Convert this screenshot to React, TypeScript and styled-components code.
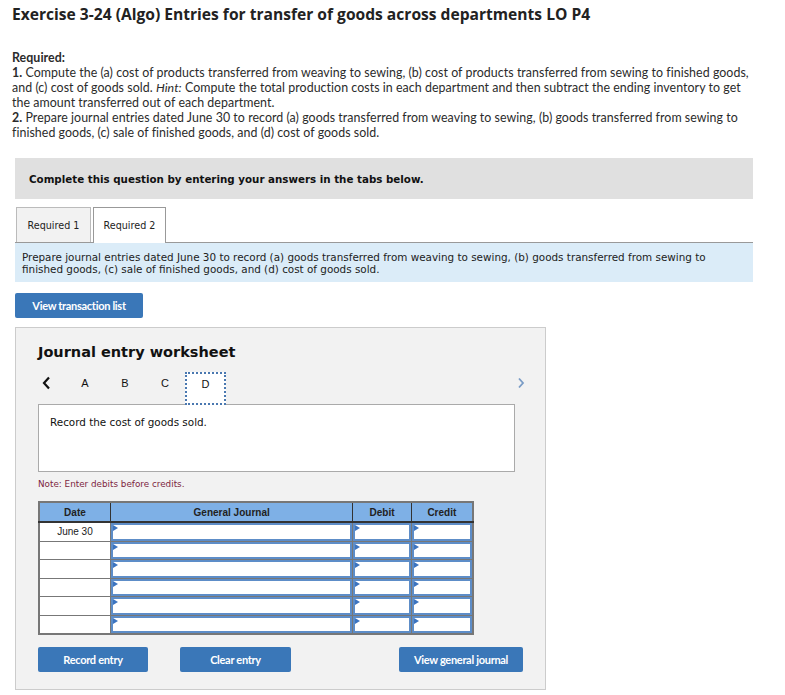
import React from 'react'
import styled, { createGlobalStyle } from 'styled-components'

const GlobalStyle = createGlobalStyle`
  body {
    margin: 0;
    background: #fff;
    font-family: Lato, "Open Sans", sans-serif;
    color: #222;
  }
`

const Page = styled.div`
  width: 738px;
  padding: 4px 0 0 15px;
`

const Title = styled.h1`
  margin: 0 0 0 -3px;
  font-family: "Open Sans", Lato, sans-serif;
  font-size: 15.6px;
  font-weight: 700;
  line-height: 20px;
  color: #222;
`

const Required = styled.div`
  margin: 26px 0 0 -3px;
  font-size: 12.4px;
  line-height: 15px;
  color: #2b2b2b;
  letter-spacing: 0.05px;
  b, i {
    display: inline-block;
    line-height: 15px;
    height: 15px;
    vertical-align: top;
  }
  b { font-weight: 700; }
`

const Banner = styled.div`
  margin-top: 18px;
  height: 41px;
  background: #e0e0e0;
  display: flex;
  align-items: center;
  padding-left: 14px;
  font-family: "DejaVu Sans", Verdana, sans-serif;
  font-size: 10.3px;
  font-weight: 700;
  color: #111;
`

const TabBar = styled.div`
  margin-top: 8px;
  display: flex;
  gap: 2px;
  border-bottom: 1px solid #999;
  padding-left: 1px;
`

const Tab = styled.div<{ $active?: boolean; $w: number }>`
  width: ${p => p.$w}px;
  box-sizing: border-box;
  display: flex;
  align-items: center;
  justify-content: center;
  font-family: "DejaVu Sans", Verdana, sans-serif;
  font-size: 9.6px;
  color: #222;
  background: ${p => (p.$active ? '#fff' : '#f2f2f2')};
  border: 1px solid ${p => (p.$active ? '#999' : '#bbb')};
  border-bottom: none;
  margin-bottom: ${p => (p.$active ? '-1px' : '0')};
  height: ${p => (p.$active ? '36px' : '35px')};
`

const Info = styled.div`
  background: #dbecf8;
  padding: 8px 7px 7px;
  font-family: "DejaVu Sans", Verdana, sans-serif;
  font-size: 10.4px;
  line-height: 12px;
  color: #222;
`

const Button = styled.button<{ $width: number }>`
  width: ${p => p.$width}px;
  height: 25px;
  background: #3a77b8;
  border: none;
  border-radius: 2px;
  color: #fff;
  font-family: Lato, sans-serif;
  font-weight: 700;
  font-size: 11px;
  letter-spacing: -0.3px;
  padding: 0;
  cursor: pointer;
`

const TopButton = styled(Button)`
  margin-top: 11px;
`

const Panel = styled.div`
  margin-top: 9px;
  width: 531px;
  height: 363px;
  background: #f2f2f2;
  border: 1px solid #ccc;
  padding: 14px 23px 0 22px;
  box-sizing: border-box;
`

const PanelTitle = styled.div`
  font-family: "DejaVu Sans", Verdana, sans-serif;
  font-weight: 700;
  font-size: 14.5px;
  color: #111;
  line-height: 20px;
`

const Nav = styled.div`
  margin-top: 10px;
  display: flex;
  align-items: flex-start;
  height: 32px;
  position: relative;
  z-index: 1;
`

const Arrow = styled.div<{ $right?: boolean }>`
  width: 14px;
  height: 22px;
  display: flex;
  align-items: center;
  justify-content: center;
  margin: ${p => (p.$right ? '0 -6px 0 auto' : '0 12px 0 1px')};
`

const Letter = styled.div<{ $active?: boolean }>`
  width: ${p => (p.$active ? '41px' : '40px')};
  height: ${p => (p.$active ? '33px' : '22px')};
  box-sizing: border-box;
  display: flex;
  align-items: ${p => (p.$active ? 'flex-start' : 'center')};
  padding-top: ${p => (p.$active ? '4px' : '0')};
  justify-content: center;
  font-family: "Liberation Sans", Arial, sans-serif;
  font-size: 11px;
  color: #111;
  background: ${p => (p.$active ? '#fff' : 'transparent')};
  border: ${p => (p.$active ? '2px dotted #4a78b0' : 'none')};
`

const Prompt = styled.div`
  width: 477px;
  height: 68px;
  box-sizing: border-box;
  background: #fff;
  border: 1px solid #aaa;
  padding: 11px 11px;
  font-family: "DejaVu Sans", Verdana, sans-serif;
  font-size: 10.4px;
  color: #111;
`

const Note = styled.div`
  margin-top: 7px;
  font-family: "DejaVu Sans", Verdana, sans-serif;
  font-size: 8.8px;
  color: #7d1f3f;
`

const Table = styled.table`
  margin-top: 12px;
  border-collapse: collapse;
  width: 436px;
  border: 2px solid #777;
  background: #fff;
`

const Th = styled.th<{ $w: number }>`
  width: ${p => p.$w}px;
  height: 18px;
  background: #7eb0e6;
  border: 1px solid #333;
  border-top: none;
  border-bottom: 2px solid #333;
  padding: 0;
  font-family: "Liberation Sans", Arial, sans-serif;
  font-weight: 700;
  font-size: 10px;
  color: #222;
`

const Td = styled.td`
  height: 17.5px;
  padding: 0;
  border: 1px solid #777;
  text-align: center;
  font-family: "Liberation Sans", Arial, sans-serif;
  font-size: 10px;
  color: #222;
`

const InputCell = styled.td`
  height: 17.5px;
  padding: 0;
  border: 1px solid #777;
`

const Field = styled.div`
  position: relative;
  height: 17.5px;
  box-sizing: border-box;
  border: 2px solid #5d8dc8;
  background: #fff;
  &::before {
    content: '';
    position: absolute;
    top: 0;
    left: 0;
    border-top: 3px solid transparent;
    border-bottom: 3px solid transparent;
    border-left: 5px solid #3c74c0;
  }
`

const Actions = styled.div`
  margin-top: 12px;
  width: 485px;
  display: flex;
  gap: 32px;
  & > :last-child { margin-left: auto; }
`

const dates = ['June 30', '', '', '', '', '']

export default function App() {
  return (
    <>
      <GlobalStyle />
      <Page>
        <Title>Exercise 3-24 (Algo) Entries for transfer of goods across departments LO P4</Title>
        <Required>
          <b>Required:</b>
          <br />
          <b>1.</b> Compute the (a) cost of products transferred from weaving to sewing, (b) cost of products transferred from sewing to finished goods, and (c) cost of goods sold. <i>Hint:</i> Compute the total production costs in each department and then subtract the ending inventory to get the amount transferred out of each department.
          <br />
          <b>2.</b> Prepare journal entries dated June 30 to record (a) goods transferred from weaving to sewing, (b) goods transferred from sewing to finished goods, (c) sale of finished goods, and (d) cost of goods sold.
        </Required>

        <Banner>Complete this question by entering your answers in the tabs below.</Banner>

        <TabBar>
          <Tab $w={75}>Required 1</Tab>
          <Tab $w={73} $active>Required 2</Tab>
        </TabBar>

        <Info>
          Prepare journal entries dated June 30 to record (a) goods transferred from weaving to sewing, (b) goods transferred from sewing to finished goods, (c) sale of finished goods, and (d) cost of goods sold.
        </Info>

        <TopButton $width={128}>View transaction list</TopButton>

        <Panel>
          <PanelTitle>Journal entry worksheet</PanelTitle>
          <Nav>
            <Arrow>
              <svg width="9" height="14" viewBox="0 0 9 14">
                <path d="M7 1.5 L2 7 L7 12.5" fill="none" stroke="#111" strokeWidth="2.2" />
              </svg>
            </Arrow>
            <Letter>A</Letter>
            <Letter>B</Letter>
            <Letter>C</Letter>
            <Letter $active>D</Letter>
            <Arrow $right>
              <svg width="8" height="12" viewBox="0 0 8 12">
                <path d="M2 1.5 L6 6 L2 10.5" fill="none" stroke="#7a9cc6" strokeWidth="1.8" />
              </svg>
            </Arrow>
          </Nav>
          <Prompt>Record the cost of goods sold.</Prompt>
          <Note>Note: Enter debits before credits.</Note>

          <Table>
            <thead>
              <tr>
                <Th $w={71}>Date</Th>
                <Th $w={246}>General Journal</Th>
                <Th $w={58}>Debit</Th>
                <Th $w={61}>Credit</Th>
              </tr>
            </thead>
            <tbody>
              {dates.map((d, i) => (
                <tr key={i}>
                  <Td>{d}</Td>
                  <InputCell><Field /></InputCell>
                  <InputCell><Field /></InputCell>
                  <InputCell><Field /></InputCell>
                </tr>
              ))}
            </tbody>
          </Table>

          <Actions>
            <Button $width={110}>Record entry</Button>
            <Button $width={111}>Clear entry</Button>
            <Button $width={124}>View general journal</Button>
          </Actions>
        </Panel>
      </Page>
    </>
  )
}
